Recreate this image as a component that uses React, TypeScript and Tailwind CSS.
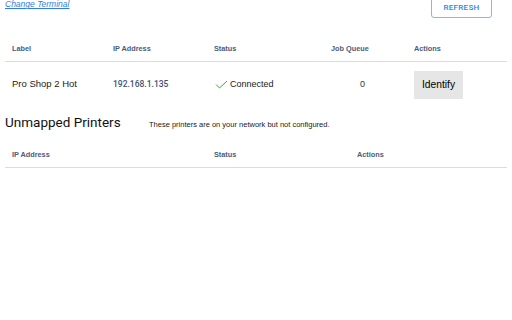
import { useState } from 'react';

function CheckIcon() {
  return (
    <svg width="13" height="9" viewBox="0 0 13 9" fill="none" className="mr-[2px]">
      <path d="M1 4.5 L4.5 8 L12 1" stroke="#43a047" strokeWidth="1" />
    </svg>
  );
}

export default function App() {
  const [printers] = useState([
    { label: 'Pro Shop 2 Hot', ip: '192.168.1.135', status: 'Connected', queue: 0 },
  ]);

  return (
    <div className="relative h-[320px] w-[512px] overflow-hidden bg-white px-[5px] font-['Liberation_Sans',Arial,sans-serif] text-black">
      {/* Top bar */}
      <div className="flex h-[18px] items-end justify-between">
        <a href="#" className="mb-[7px] text-[8.5px] italic text-[#2f7fe0] underline">
          Change Terminal
        </a>
        <button
          type="button"
          className="mr-[15px] flex h-[30px] w-[61px] shrink-0 items-end justify-center rounded-[3px] border border-[#7fbaf3] pb-[3px] font-['Roboto',sans-serif] text-[8px] font-medium tracking-[0.3px] text-[#1e88e5]"
        >
          REFRESH
        </button>
      </div>

      {/* Mapped printers */}
      <div className="mt-[17px]">
        <div className="grid h-[27px] grid-cols-[101px_101px_117px_83px_100px] items-center border-b border-[#dcdcdc] pt-[2px] text-[7.3px] font-bold text-[#4a5b7b]">
          <span className="pl-[7px]">Label</span>
          <span className="pl-[7px]">IP Address</span>
          <span className="pl-[7px]">Status</span>
          <span className="pl-[7px]">Job Queue</span>
          <span className="pl-[7px]">Actions</span>
        </div>
        {printers.map((p) => (
          <div
            key={p.ip}
            className="grid h-[44px] grid-cols-[101px_101px_117px_83px_100px] items-center pt-[1px] text-[9.5px]"
          >
            <span className="pl-[7px] text-[#222]">{p.label}</span>
            <span className="pl-[7px] font-['Roboto',sans-serif] text-[8.5px] font-medium text-[#3a5176]">
              {p.ip}
            </span>
            <span className="flex items-center pl-[8px] text-[9px] text-[#222]">
              <CheckIcon />
              {p.status}
            </span>
            <span className="pl-[36px] text-[9px] text-[#333]">{p.queue}</span>
            <span className="pl-[7px]">
              <button
                type="button"
                className="h-[28px] w-[49px] bg-[#e6e6e6] text-[10.25px] text-black"
              >
                Identify
              </button>
            </span>
          </div>
        ))}
      </div>

      {/* Unmapped printers */}
      <div className="mt-[8px] flex h-[18px] items-center">
        <h2 className="w-[144px] font-['Roboto',sans-serif] text-[13.5px] leading-none text-[#111]">
          Unmapped Printers
        </h2>
        <p className="pt-[3px] text-[7.5px] text-[#222]">
          These printers are on your network but not configured.
        </p>
      </div>
      <div className="mt-[9px] grid h-[27px] grid-cols-[202px_143px_157px] items-center border-b border-[#dcdcdc] pt-[2px] text-[7.3px] font-bold text-[#4a5b7b]">
        <span className="pl-[7px]">IP Address</span>
        <span className="pl-[7px]">Status</span>
        <span className="pl-[7px]">Actions</span>
      </div>
    </div>
  );
}
